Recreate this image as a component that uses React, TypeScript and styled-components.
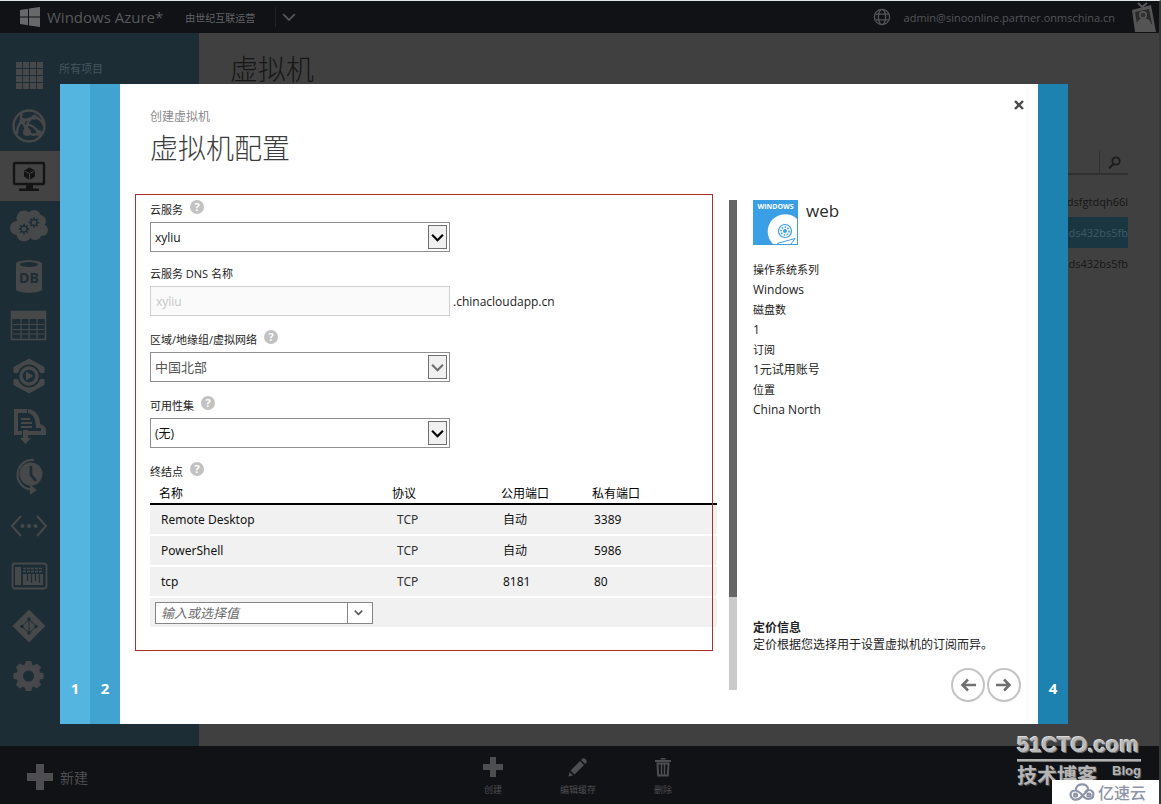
import React from 'react';
import styled, { createGlobalStyle } from 'styled-components';

const GlobalStyle = createGlobalStyle`
  *, *::before, *::after { box-sizing: border-box; }
  body {
    margin: 0;
    background: #404040;
    font-family: "Open Sans", "Noto Sans CJK SC", sans-serif;
    font-size: 12px;
    color: #222;
  }
  button, input, select { font: inherit; color: inherit; }
  h1, h2, p, dl, dd, ul { margin: 0; padding: 0; }
`;

/* ---------- portal behind the dialog ---------- */

const Page = styled.div`
  position: relative;
  min-height: 100vh;
  display: flex;
  flex-direction: column;
  background: #404040;
  border-top: 1px solid #dfe6e6;
  border-right: 2px solid #363636;
  overflow: hidden;
`;

const TopBar = styled.header`
  height: 32px;
  flex: none;
  display: flex;
  align-items: center;
  padding: 0 2px 0 20px;
  background: #111216;
  color: #545558;
`;

const Brand = styled.span`
  margin-left: 7px;
  font-size: 15px;
  line-height: 32px;
  color: #58595b;
`;

const Operator = styled.span`
  margin-left: 22px;
  font-size: 10px;
  color: #626366;
`;

const IconButton = styled.button`
  display: flex;
  align-items: center;
  justify-content: center;
  padding: 0;
  border: 0;
  background: none;
  color: inherit;
`;

const BrandMenu = styled(IconButton)`
  height: 20px;
  margin-left: 20px;
  padding-left: 6px;
  border-left: 1px solid #222327;
`;

const Account = styled.div`
  margin-left: auto;
  display: flex;
  align-items: center;
  gap: 13px;
`;

const AccountName = styled.span`
  margin-right: 3px;
  font-size: 11px;
`;

const Middle = styled.div`
  flex: 1;
  display: flex;
`;

const Sidebar = styled.nav`
  width: 199px;
  flex: none;
  padding-top: 18px;
  background: #1c2d35;
`;

const NavItem = styled.a<{ $active?: boolean }>`
  display: flex;
  align-items: center;
  gap: 10px;
  height: 50px;
  padding-left: 9px;
  font-size: 11px;
  text-decoration: none;
  color: #46565c;
  background: ${p => (p.$active ? '#434343' : 'transparent')};
  svg { color: ${p => (p.$active ? '#141414' : '#46484a')}; }
`;

const NavLabel = styled.span`
  margin-bottom: 16px;
`;

const Content = styled.main`
  flex: 1;
  padding: 18px 31px 0;
`;

const PageTitle = styled.h1`
  font-size: 28px;
  line-height: 36px;
  font-weight: 300;
  color: #161616;
`;

const SearchBar = styled.div`
  display: flex;
  justify-content: flex-end;
  margin-top: 64px;
  border-bottom: 2px solid #303030;
`;

const SearchButton = styled(IconButton)`
  width: 29px;
  height: 22px;
  border-left: 1px solid #303030;
  color: #1c1c1c;
`;

const HostList = styled.ul`
  margin-top: 11px;
  list-style: none;
`;

const HostRow = styled.li<{ $selected?: boolean }>`
  height: 31px;
  line-height: 31px;
  font-size: 11px;
  text-align: right;
  color: ${p => (p.$selected ? '#405a64' : '#161616')};
  background: ${p => (p.$selected ? '#1a3641' : 'transparent')};
`;

const CommandBar = styled.footer`
  height: 58px;
  flex: none;
  display: grid;
  grid-template-columns: 1fr auto 1fr;
  align-items: center;
  padding: 3px 3px 0 0;
  background: #111216;
  color: #4e4e50;
`;

const NewButton = styled(IconButton)`
  justify-self: start;
  gap: 7px;
  padding-left: 27px;
  font-size: 14px;
`;

const Commands = styled.div`
  display: flex;
`;

const Command = styled(IconButton)`
  width: 85px;
  flex-direction: column;
  gap: 6px;
  font-size: 9px;
  line-height: 14px;
`;

/* ---------- wizard dialog ---------- */

const Overlay = styled.div`
  position: absolute;
  inset: 0;
  display: flex;
  padding: 83px 91px 80px 60px;
`;

const Dialog = styled.section`
  flex: 1;
  display: flex;
  background: #fff;
`;

const Step = styled.button<{ $tone: string }>`
  width: 30px;
  flex: none;
  display: flex;
  align-items: flex-end;
  justify-content: center;
  padding: 0 0 25px;
  border: 0;
  background: ${p => p.$tone};
  color: #fff;
  font-size: 15px;
  line-height: 22px;
  font-weight: 700;
`;

const Body = styled.div`
  flex: 1;
  min-width: 0;
  display: flex;
  flex-direction: column;
  padding: 12px 17px 22px 30px;
`;

const DialogHead = styled.header`
  display: flex;
  justify-content: space-between;
  height: 104px;
`;

const Crumb = styled.p`
  margin-top: 12px;
  font-size: 12px;
  line-height: 18px;
  color: #8a8a8a;
`;

const Title = styled.h2`
  margin-top: 2px;
  font-size: 28px;
  line-height: 40px;
  font-weight: 300;
  color: #3c3c3c;
`;

const CloseButton = styled(IconButton)`
  width: 18px;
  height: 18px;
  margin: 0 -7px 0 0;
  color: #4a4a4a;
`;

const Columns = styled.div`
  flex: 1;
  display: grid;
  grid-template-columns: minmax(0, 1fr) 8px 272px;
  column-gap: 12px;
`;

const Form = styled.form`
  position: relative;
  display: flex;
  flex-direction: column;
  gap: 14px;
`;

const Highlight = styled.div`
  position: absolute;
  inset: -6px 4px 51px -15px;
  border: 1px solid #a8302e;
  pointer-events: none;
`;

const FieldPair = styled.div`
  display: flex;
  flex-direction: column;
  gap: 12px;
`;

const Field = styled.div`
  display: flex;
  flex-direction: column;
`;

const LabelRow = styled.div`
  display: flex;
  gap: 7px;
  height: 22px;
`;

const Label = styled.label`
  font-size: 11px;
  line-height: 20px;
  color: #222;
`;

const HelpButton = styled.button`
  width: 14px;
  height: 14px;
  padding: 0;
  border: 0;
  border-radius: 50%;
  background: #c2c2c2;
  color: #fff;
  font-size: 11px;
  line-height: 14px;
  font-weight: 700;
`;

const SelectBox = styled.div`
  position: relative;
  width: 300px;
  height: 30px;
`;

const Select = styled.select`
  width: 100%;
  height: 100%;
  padding: 0 26px 0 4px;
  border: 1px solid #8f8f8f;
  border-radius: 0;
  background: #fff;
  appearance: none;
  color: #111;
  &:disabled { color: #555; opacity: 1; font-size: 13px; }
`;

const SelectArrow = styled.span<{ $dim?: boolean }>`
  position: absolute;
  top: 3px;
  right: 3px;
  width: 19px;
  height: 24px;
  display: flex;
  align-items: center;
  justify-content: center;
  border: 1px solid #707070;
  background: #f0f0f0;
  color: ${p => (p.$dim ? '#6e6e6e' : '#000')};
  pointer-events: none;
`;

const DnsRow = styled.div`
  display: flex;
  align-items: center;
  gap: 3px;
`;

const DnsInput = styled.input`
  width: 300px;
  height: 30px;
  padding: 0 5px;
  border: 1px solid #d0d0d0;
  background: #fafafa;
  color: #c6c6c6;
`;

const Endpoints = styled.table`
  width: 100%;
  table-layout: fixed;
  border-collapse: collapse;
  font-family: "Noto Sans", "Noto Sans CJK SC", sans-serif;
`;

const HeadCell = styled.th<{ $width?: number }>`
  width: ${p => (p.$width ? `${p.$width}px` : 'auto')};
  height: 20px;
  padding: 0 0 0 9px;
  border-bottom: 2px solid #000;
  font-size: 12px;
  line-height: 18px;
  font-weight: 400;
  text-align: left;
  color: #000;
`;

const BodyRow = styled.tr`
  height: 31px;
  border-bottom: 2px solid #fff;
  background: #f1f1f1;
`;

const Cell = styled.td<{ $muted?: boolean; $flush?: boolean }>`
  padding: 0 0 0 ${p => (p.$flush ? 5 : p.$muted ? 14 : 11)}px;
  line-height: 18px;
  color: ${p => (p.$muted ? '#333' : '#111')};
`;

const Combo = styled.div`
  display: flex;
  width: 218px;
  height: 22px;
  border: 1px solid #858585;
  background: #fff;
`;

const ComboInput = styled.input`
  flex: 1;
  min-width: 0;
  padding: 0 5px;
  border: 0;
  background: none;
  font-size: 13px;
  font-style: italic;
  &::placeholder { color: #6c6c6c; opacity: 1; }
`;

const ComboButton = styled(IconButton)`
  width: 25px;
  border-left: 1px solid #858585;
  padding-right: 3px;
  color: #555;
`;

const ScrollTrack = styled.div`
  margin-bottom: 12px;
  background: #cacaca;
`;

const ScrollThumb = styled.div`
  height: 81%;
  background: #656565;
`;

const Summary = styled.aside`
  display: flex;
  flex-direction: column;
  padding-left: 4px;
`;

const ImageHead = styled.div`
  display: flex;
  gap: 8px;
`;

const ImageName = styled.span`
  font-size: 17px;
  line-height: 22px;
  color: #2c2c2c;
`;

const Facts = styled.dl`
  margin-top: 15px;
  line-height: 20px;
  color: #222;
`;

const FactName = styled.dt`
  font-size: 11px;
`;

const Pricing = styled.div`
  margin-top: auto;
  font-size: 12px;
  line-height: 17px;
  color: #222;
`;

const Pager = styled.div`
  display: flex;
  justify-content: flex-end;
  gap: 2px;
  margin-top: 15px;
`;

const RoundButton = styled(IconButton)`
  width: 34px;
  height: 34px;
  border: 2px solid #c4c4c4;
  border-radius: 50%;
  color: #707070;
`;

/* ---------- site stamps in the corner ---------- */

const Stamp = styled.div`
  position: absolute;
  right: 0;
  bottom: 0;
  width: 142px;
  display: flex;
  flex-direction: column;
`;

const StampName = styled.span`
  font: 700 22px/28px "Liberation Sans", sans-serif;
  color: #b9b9b9;
  text-shadow: 1px 1px 0 #6e6e6e, -1px -1px 0 #dadada;
  white-space: nowrap;
`;

const StampRule = styled.div`
  width: 124px;
  height: 3px;
  background: #b0b0b0;
  border-bottom: 1px solid #777;
`;

const StampLine = styled.div`
  display: flex;
  justify-content: space-between;
  width: 124px;
  height: 18px;
  font-size: 20px;
  line-height: 28px;
  font-weight: 700;
  color: #b4b4b4;
  text-shadow: 1px 1px 0 #555;
`;

const StampBlog = styled.span`
  font: 700 13px/18px "Liberation Sans", sans-serif;
`;

const Host = styled.div`
  position: relative;
  align-self: flex-end;
  width: 109px;
  height: 24px;
  margin-right: -2px;
  display: flex;
  align-items: center;
  gap: 3px;
  padding-left: 17px;
  background: #fff;
  color: #8e94a8;
  font-size: 16px;
  font-weight: 500;
`;

/* ---------- icons ---------- */

const Chevron = ({ w = 12, s = 2 }: { w?: number; s?: number }) => (
  <svg width={w} height={w} viewBox="0 0 12 12" fill="none" stroke="currentColor" strokeWidth={s}>
    <path d="M1 3.5 6 8.5 11 3.5" />
  </svg>
);

const Plus = ({ size, thick }: { size: number; thick: number }) => {
  const a = (size - thick) / 2;
  return (
    <svg width={size} height={size} fill="currentColor">
      <rect x={a} width={thick} height={size} />
      <rect y={a} width={size} height={thick} />
    </svg>
  );
};

const NavSvg = ({ children }: { children: React.ReactNode }) => (
  <svg width="40" height="40" viewBox="0 0 40 40" fill="currentColor" stroke="none">{children}</svg>
);

const BG = '#1c2d35';

const gearPath = (cx: number, cy: number, r: number, n: number, depth: number) => {
  const pts: string[] = [];
  for (let i = 0; i < n; i++) {
    [-0.32, -0.2, 0.2, 0.32].forEach((o, k) => {
      const a = ((i + o) / n) * Math.PI * 2;
      const rad = k === 0 || k === 3 ? r - depth : r;
      pts.push(`${(cx + rad * Math.cos(a)).toFixed(2)} ${(cy + rad * Math.sin(a)).toFixed(2)}`);
    });
  }
  return `M${pts.join('L')}Z`;
};

const AllItemsIcon = () => (
  <NavSvg>
    <rect x="7" y="6" width="27" height="27" />
    <path d="M13.500 6v27M20.500 6v27M27.500 6v27M7 12.500h27M7 19.500h27M7 26.500h27" stroke={BG} strokeWidth="1" />
  </NavSvg>
);
const WebIcon = () => (
  <NavSvg>
    <circle cx="20" cy="20" r="15.500" fill="none" stroke="currentColor" strokeWidth="2.400" />
    <circle cx="13.500" cy="15" r="3.200" />
    <circle cx="25.500" cy="11" r="2.600" />
    <circle cx="18" cy="26" r="4" />
    <circle cx="30" cy="27" r="3" />
    <path d="M13.500 15 25.500 11M13.500 15 18 26Q24 31 30 27M25.500 11Q16 15 18 26M25.500 11Q33 13 35 20M18 19Q24 18 30 27M13.500 15Q8 19 8 28M13.500 15Q11 11 13 7" fill="none" stroke="currentColor" strokeWidth="2.400" />
  </NavSvg>
);
const MachineIcon = () => (
  <NavSvg>
    <rect x="5" y="7" width="30" height="21" rx="1" fill="none" stroke="currentColor" strokeWidth="2.4" />
    <path d="M17 29h7v3.500h6V35H10v-2.500h7zM20.500 11.500l5.500 3v6l-5.500 3.500-5.500-3.500v-6z" />
    <path d="M15.500 15l5 2.500 5-2.500M20.500 17.500V24" fill="none" stroke="#434343" strokeWidth="1" />
  </NavSvg>
);
const CloudIcon = () => (
  <NavSvg>
    <circle cx="8" cy="22" r="7" /><circle cx="15" cy="12" r="7.500" /><circle cx="25" cy="11" r="7" />
    <circle cx="31" cy="15" r="6" /><circle cx="33" cy="24" r="6" /><circle cx="26" cy="27" r="7" />
    <circle cx="15" cy="28" r="7.500" /><rect x="9" y="13" width="23" height="15" />
    <path d={gearPath(15, 23, 5.2, 8, 1.6)} fill={BG} /><circle cx="15" cy="23" r="2.300" />
    <path d={gearPath(25, 16.5, 5.2, 8, 1.6)} fill={BG} /><circle cx="25" cy="16.500" r="2.300" />
  </NavSvg>
);
const DbIcon = () => (
  <NavSvg>
    <path d="M7 8c0-5 26-5 26 0v25c0 5-26 5-26 0z" />
    <ellipse cx="20" cy="8.500" rx="9" ry="2.500" fill={BG} />
    <text x="20" y="27" fontSize="14" fontWeight="700" textAnchor="middle" fill={BG} fontFamily="Open Sans, sans-serif">DB</text>
  </NavSvg>
);
const TableIcon = () => (
  <NavSvg>
    <rect x="2.500" y="5.500" width="34" height="28" fill="none" stroke="currentColor" strokeWidth="1.600" />
    <rect x="2" y="5" width="35" height="8" />
    <path d="M4 18.500h31M4 23.500h31M4 28h31M12 13v20M20 13v20M28 13v20" stroke="currentColor" strokeWidth="1.200" />
  </NavSvg>
);
const MediaIcon = () => (
  <NavSvg>
    <path d="M20 2.500 35.500 11v6H31.100a11.500 11.500 0 0 0-22.200 0H4.500v-6zM20 37.500 4.500 29v-6H8.900a11.500 11.500 0 0 0 22.200 0h4.400v6z" />
    <circle cx="20" cy="20" r="8" fill="none" stroke="currentColor" strokeWidth="3.400" />
    <path d="M17 15.500v9l7.500-4.500z" />
  </NavSvg>
);
const ServiceBusIcon = () => (
  <NavSvg>
    <path d="M5 3h13v4H9v18h4v4H5zM18 25h14v-3h-5c0-9-3-14-8-15V3c8 1 12 7 12 15 3 1 6 3 6 6v5H18z" />
    <path d="M12 13h9M12 17h11M12 21h11" stroke="currentColor" strokeWidth="1.800" />
    <path d="M14 24h5v8h3l-5.500 6-5.500-6h3z" />
  </NavSvg>
);
const ClockIcon = () => (
  <NavSvg>
    <circle cx="22" cy="18" r="11.500" />
    <path d="M22 10v9l5 6" fill="none" stroke={BG} strokeWidth="2.600" />
    <path d="M25 4A14.800 14.800 0 1 0 23 33.500" fill="none" stroke="currentColor" strokeWidth="2.200" />
    <path d="M21 28.500l7 5.500-7 5z" />
  </NavSvg>
);
const NetworkIcon = () => (
  <NavSvg>
    <path d="M12 10 3 20 12 30M28 10 37 20 28 30" fill="none" stroke="currentColor" strokeWidth="2" />
    <circle cx="13.500" cy="20" r="2.100" /><circle cx="20" cy="20" r="2.100" /><circle cx="26.500" cy="20" r="2.100" />
  </NavSvg>
);
const BizTalkIcon = () => (
  <NavSvg>
    <rect x="3.500" y="7.500" width="34" height="25" rx="2.500" fill="none" stroke="currentColor" strokeWidth="1.800" />
    <path d="M6 11h6v18H6zM14 18h20v11H14z" />
    <path d="M14 12.500h20M14 15.500h20" stroke="currentColor" strokeWidth="1.600" strokeDasharray="3 1" />
    <path d="M18.500 18v7M22.500 18v9M26.500 18v7M30.500 18v9" stroke={BG} strokeWidth="1.200" />
  </NavSvg>
);
const TrafficIcon = () => (
  <NavSvg>
    <path d="M20 3.500 36.500 20 20 36.500 3.500 20z" />
    <path d="M20 13v14M13 20.500 20 13l7 7.500-7 6.500z" fill="none" stroke={BG} strokeWidth="1" />
    <circle cx="20" cy="13" r="1.700" fill={BG} /><circle cx="13" cy="20.500" r="1.700" fill={BG} />
    <circle cx="27" cy="20.500" r="1.700" fill={BG} /><circle cx="20" cy="27" r="1.700" fill={BG} />
  </NavSvg>
);
const SettingsIcon = () => (
  <NavSvg>
    <path d={gearPath(19.5, 20, 14.5, 8, 3)} strokeLinejoin="round" stroke="currentColor" strokeWidth="1.500" />
    <circle cx="19.500" cy="20" r="5.500" fill={BG} />
  </NavSvg>
);

const WindowsLogo = () => (
  <svg width="20" height="20" viewBox="0 0 20 20" fill="#66686a">
    <path d="M0 3 8 1.800V9.500H0zM9 1.600 20 0v9.500H9zM0 10.500h8v7.700L0 17zM9 10.500h11V20L9 18.400z" />
  </svg>
);
const GlobeIcon = () => (
  <svg width="18" height="18" viewBox="0 0 18 18" fill="none" stroke="currentColor" strokeWidth="1.300">
    <circle cx="9" cy="9" r="7.600" />
    <ellipse cx="9" cy="9" rx="3.600" ry="7.600" />
    <path d="M2.500 6.200h13M2.500 11.800h13" />
  </svg>
);
const BadgeIcon = () => (
  <svg width="26" height="32" viewBox="0 0 26 32">
    <path d="M7 2l4 4 5-4" fill="none" stroke="#5a5a5a" strokeWidth="2" />
    <path d="M1 9 20 4l5 27H4z" fill="#545454" />
    <path d="M4 11 18 8l3 15H6z" fill="#2a2a2a" />
    <circle cx="12" cy="14" r="4" fill="#5c5c5c" />
    <path d="M6 23c0-7 12-8 14-1v3H7z" fill="#545454" />
    <circle cx="12" cy="14" r="2.500" fill="#333" />
  </svg>
);
const SearchIcon = () => (
  <svg width="13" height="13" viewBox="0 0 13 13" fill="none" stroke="currentColor">
    <circle cx="8" cy="5" r="3.700" strokeWidth="1.800" />
    <path d="M5.500 8 1 12.300" strokeWidth="2.200" />
  </svg>
);
const PencilIcon = () => (
  <svg width="20" height="20" viewBox="0 0 20 20" fill="currentColor">
    <path d="M14.500 1.500c1.500-1.500 5.500 2 4 4L17 7l-4-4zM12 4l4 4L6.500 17.500l-4-4zM1.500 15 5 18.500l-4.500 1z" />
  </svg>
);
const TrashIcon = () => (
  <svg width="20" height="20" viewBox="0 0 20 20" fill="currentColor">
    <path d="M2 3h16v2H2zM7.500 1h5v1.500h-5z" />
    <path d="M4.500 6.500h11L14.800 18.500H5.200z" fill="none" stroke="currentColor" strokeWidth="2" />
    <path d="M8.500 7v11M11.500 7v11" stroke="currentColor" strokeWidth="1.500" />
  </svg>
);
const CloseIcon = () => (
  <svg width="10" height="10" viewBox="0 0 10 10" fill="none" stroke="currentColor" strokeWidth="2.400">
    <path d="M1 1 9 9M9 1 1 9" />
  </svg>
);
const ArrowIcon = ({ flip }: { flip?: boolean }) => (
  <svg width="16" height="14" viewBox="0 0 16 14" fill="none" stroke="currentColor" strokeWidth="2.600">
    <path d={flip ? 'M16 7H2.500M8 1.500 2.500 7 8 12.500' : 'M0 7h13.500M8 1.500 13.500 7 8 12.500'} />
  </svg>
);
const DiscIcon = () => (
  <svg width="45" height="45" viewBox="0 0 45 45">
    <rect width="45" height="45" fill="#3b9fe6" />
    <path d="M44 19A18 18 0 0 0 20 44h24z" fill="#fff" />
    <path d="M44 19A17 17 0 1 0 20 44h24z" fill="#fff" />
    <circle cx="32" cy="31" r="6.500" fill="none" stroke="#3b9fe6" strokeWidth="1.200" />
    <circle cx="32" cy="31" r="4" fill="none" stroke="#3b9fe6" strokeWidth="1.600" strokeDasharray="1.500 1.500" />
    <circle cx="32" cy="31" r="2" fill="#3b9fe6" />
    <path d="M24 43.500 42 38.500 38 44" fill="none" stroke="#3b9fe6" strokeWidth="1" />
    <text x="22.500" y="9" fontSize="7" fontWeight="700" textAnchor="middle" fill="#fff" fontFamily="Open Sans, sans-serif">WINDOWS</text>
  </svg>
);
const CloudLogo = () => (
  <svg width="26" height="20" viewBox="0 0 26 20" fill="none" stroke="currentColor" strokeWidth="2.200">
    <path d="M7 8.500C6 .500 19 .500 19 7c0 3-3 4-5 6-3 4-7 5.500-10 4-4-3-3-8.500 2-8.500 6 0 8 8.500 13 8.500 7 0 7-9 1-9-2 0-3 1-4 2" />
    <circle cx="6.500" cy="13" r="1.500" /><circle cx="20" cy="13" r="1.500" />
  </svg>
);

const navIcons = [
  AllItemsIcon, WebIcon, MachineIcon, CloudIcon, DbIcon, TableIcon, MediaIcon,
  ServiceBusIcon, ClockIcon, NetworkIcon, BizTalkIcon, TrafficIcon, SettingsIcon,
];

const endpoints = [
  ['Remote Desktop', 'TCP', '自动', '3389'],
  ['PowerShell', 'TCP', '自动', '5986'],
  ['tcp', 'TCP', '8181', '80'],
];

const facts = [
  ['操作系统系列', 'Windows'],
  ['磁盘数', '1'],
  ['订阅', '1元试用账号'],
  ['位置', 'China North'],
];

const Help = () => <HelpButton type="button" aria-label="帮助">?</HelpButton>;

interface DropDownProps { id: string; label: string; value: string; disabled?: boolean }

const DropDown = ({ id, label, value, disabled }: DropDownProps) => (
  <Field>
    <LabelRow><Label htmlFor={id}>{label}</Label><Help /></LabelRow>
    <SelectBox>
      <Select id={id} disabled={disabled}><option>{value}</option></Select>
      <SelectArrow $dim={disabled}><Chevron w={13} s={2} /></SelectArrow>
    </SelectBox>
  </Field>
);

export default function App() {
  return (
    <Page>
      <GlobalStyle />
      <TopBar>
        <WindowsLogo />
        <Brand>Windows Azure*</Brand>
        <Operator>由世纪互联运营</Operator>
        <BrandMenu aria-label="菜单"><Chevron w={14} s={1.5} /></BrandMenu>
        <Account>
          <GlobeIcon />
          <AccountName>admin@sinoonline.partner.onmschina.cn</AccountName>
          <BadgeIcon />
        </Account>
      </TopBar>

      <Middle>
        <Sidebar>
          {navIcons.map((Icon, i) => (
            <NavItem key={i} href="#" $active={i === 2}>
              <Icon />
              {i === 0 && <NavLabel>所有项目</NavLabel>}
            </NavItem>
          ))}
        </Sidebar>
        <Content>
          <PageTitle>虚拟机</PageTitle>
          <SearchBar><SearchButton aria-label="搜索"><SearchIcon /></SearchButton></SearchBar>
          <HostList>
            <HostRow>ndsfgtdqh66l</HostRow>
            <HostRow $selected>nds432bs5fb</HostRow>
            <HostRow>nds432bs5fb</HostRow>
          </HostList>
        </Content>
      </Middle>

      <CommandBar>
        <NewButton><Plus size={26} thick={8} />新建</NewButton>
        <Commands>
          <Command><Plus size={20} thick={6} />创建</Command>
          <Command><PencilIcon />编辑缓存</Command>
          <Command><TrashIcon />删除</Command>
        </Commands>
      </CommandBar>

      <Overlay>
        <Dialog role="dialog" aria-labelledby="wizard-title">
          <Step $tone="#53b5e0">1</Step>
          <Step $tone="#41a4d0">2</Step>
          <Body>
            <DialogHead>
              <div>
                <Crumb>创建虚拟机</Crumb>
                <Title id="wizard-title">虚拟机配置</Title>
              </div>
              <CloseButton aria-label="关闭"><CloseIcon /></CloseButton>
            </DialogHead>
            <Columns>
              <Form>
                <FieldPair>
                  <DropDown id="service" label="云服务" value="xyliu" />
                  <Field>
                    <LabelRow><Label htmlFor="dns">云服务 DNS 名称</Label></LabelRow>
                    <DnsRow>
                      <DnsInput id="dns" defaultValue="xyliu" disabled />
                      <span>.chinacloudapp.cn</span>
                    </DnsRow>
                  </Field>
                </FieldPair>
                <DropDown id="region" label="区域/地缘组/虚拟网络" value="中国北部" disabled />
                <DropDown id="availability" label="可用性集" value="(无)" />
                <Field>
                  <LabelRow><Label as="span">终结点</Label><Help /></LabelRow>
                  <Endpoints>
                    <thead>
                      <tr>
                        <HeadCell>名称</HeadCell>
                        <HeadCell $width={109}>协议</HeadCell>
                        <HeadCell $width={91}>公用端口</HeadCell>
                        <HeadCell $width={134}>私有端口</HeadCell>
                      </tr>
                    </thead>
                    <tbody>
                      {endpoints.map(([name, protocol, publicPort, privatePort]) => (
                        <BodyRow key={name}>
                          <Cell>{name}</Cell>
                          <Cell $muted>{protocol}</Cell>
                          <Cell>{publicPort}</Cell>
                          <Cell>{privatePort}</Cell>
                        </BodyRow>
                      ))}
                      <BodyRow>
                        <Cell $flush colSpan={4}>
                          <Combo>
                            <ComboInput aria-label="终结点名称" placeholder="输入或选择值" />
                            <ComboButton type="button" aria-label="选择"><Chevron w={9} s={2} /></ComboButton>
                          </Combo>
                        </Cell>
                      </BodyRow>
                    </tbody>
                  </Endpoints>
                </Field>
                <Highlight />
              </Form>
              <ScrollTrack><ScrollThumb /></ScrollTrack>
              <Summary>
                <ImageHead><DiscIcon /><ImageName>web</ImageName></ImageHead>
                <Facts>
                  {facts.map(([name, value]) => (
                    <React.Fragment key={name}>
                      <FactName>{name}</FactName>
                      <dd>{value}</dd>
                    </React.Fragment>
                  ))}
                </Facts>
                <Pricing>
                  <strong>定价信息</strong>
                  <p>定价根据您选择用于设置虚拟机的订阅而异。</p>
                </Pricing>
                <Pager>
                  <RoundButton aria-label="上一步"><ArrowIcon flip /></RoundButton>
                  <RoundButton aria-label="下一步"><ArrowIcon /></RoundButton>
                </Pager>
              </Summary>
            </Columns>
          </Body>
          <Step $tone="#1d82b0">4</Step>
        </Dialog>
      </Overlay>

      <Stamp>
        <StampName>51CTO.com</StampName>
        <StampRule />
        <StampLine>技术博客<StampBlog>Blog</StampBlog></StampLine>
        <Host><CloudLogo />亿速云</Host>
      </Stamp>
    </Page>
  );
}
